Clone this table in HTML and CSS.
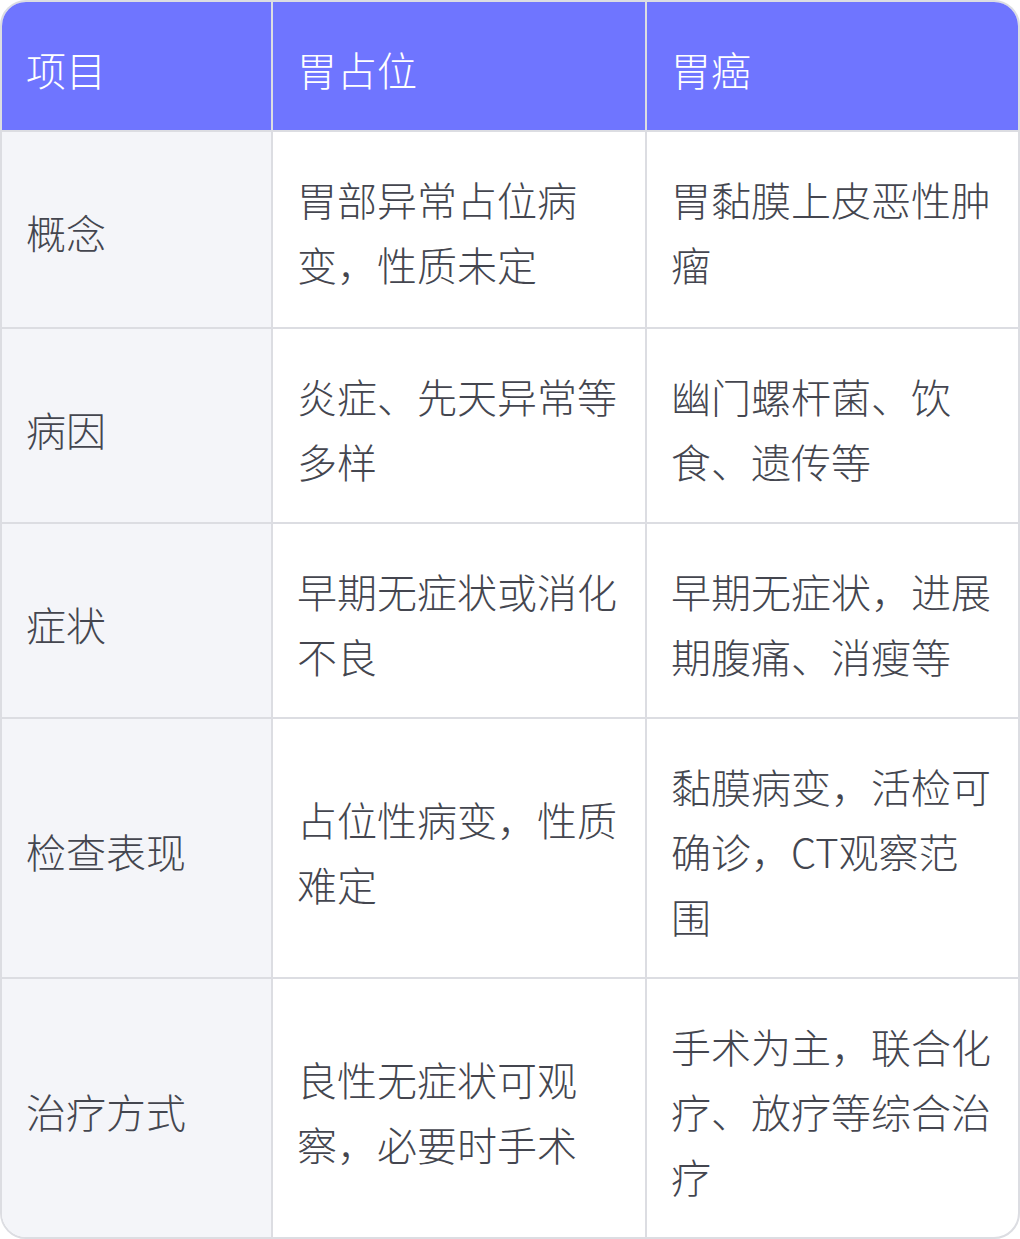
FILE: index.html
```html
<!DOCTYPE html>
<html lang="zh-CN">
<head>
<meta charset="utf-8">
<title>胃占位与胃癌</title>
<link rel="stylesheet" href="styles.css">
</head>
<body>
<div class="wrap">
<table class="cmp">
<colgroup><col class="c1"><col class="c2"><col class="c3"></colgroup>
<thead>
<tr><th>项目</th><th>胃占位</th><th>胃癌</th></tr>
</thead>
<tbody>
<tr class="first"><td class="label">概念</td><td>胃部异常占位病变，性质未定</td><td>胃黏膜上皮恶性肿瘤</td></tr>
<tr><td class="label">病因</td><td>炎症、先天异常等多样</td><td>幽门螺杆菌、饮食、遗传等</td></tr>
<tr><td class="label">症状</td><td>早期无症状或消化不良</td><td>早期无症状，进展期腹痛、消瘦等</td></tr>
<tr><td class="label">检查表现</td><td>占位性病变，性质难定</td><td>黏膜病变，活检可确诊，CT观察范围</td></tr>
<tr><td class="label">治疗方式</td><td>良性无症状可观察，必要时手术</td><td>手术为主，联合化疗、放疗等综合治疗</td></tr>
</tbody>
</table>
</div>
</body>
</html>
```

FILE: styles.css
```css
html, body {
  margin: 0;
  padding: 0;
  background: #ffffff;
}
.wrap {
  width: 1020px;
  box-sizing: border-box;
  border: 2px solid #dcdde2;
  border-radius: 26px;
  overflow: hidden;
}
.cmp {
  width: 1016px;
  border-collapse: separate;
  border-spacing: 0;
  table-layout: fixed;
  font-family: "Noto Sans CJK SC", "Noto Sans", sans-serif;
  font-size: 40px;
  font-weight: 300;
  line-height: 65px;
  color: #44464f;
}
.c1 { width: 271px; }
.c2 { width: 374px; }
.c3 { width: 371px; }
.cmp th, .cmp td {
  padding: 35px 24px 28px 24px;
  text-align: left;
  vertical-align: middle;
  border-right: 2px solid #dcdde2;
  border-bottom: 2px solid #dcdde2;
  word-break: break-all;
}
.cmp tr.first td {
  padding-bottom: 30px;
}
.cmp th:last-child, .cmp td:last-child {
  border-right: none;
}
.cmp tbody tr:last-child td {
  border-bottom: none;
}
.cmp th {
  background: #6f75ff;
  color: #ffffff;
  font-weight: 300;
}
.cmp td.label {
  background: #f4f5f9;
}
```
